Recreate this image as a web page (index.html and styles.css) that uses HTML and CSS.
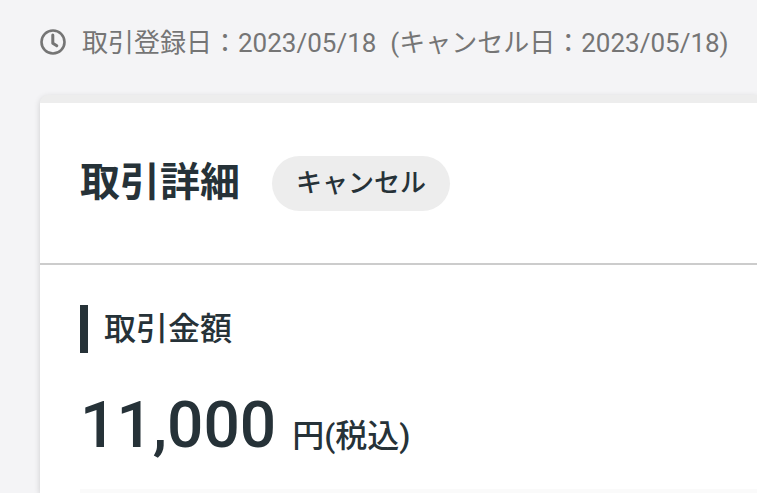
FILE: index.html
```html
<!DOCTYPE html>
<html lang="ja">
  <head>
    <meta charset="UTF-8" />
    <meta name="viewport" content="width=device-width, initial-scale=1.0" />
    <title>取引詳細</title>
    <link rel="stylesheet" href="styles.css">
  </head>
  <body>
    <div class="date">
      <svg class="date-icon" viewBox="0 0 26 26" aria-hidden="true">
        <circle cx="13" cy="13" r="11.5" />
        <path d="M12.8 6v8.2l4 2.6" stroke-width="3" stroke-linecap="round" stroke-linejoin="round" />
      </svg>
      <p class="date-text">
        <span>取引登録日：2023/05/18</span>
        <span>(キャンセル日：2023/05/18)</span>
      </p>
    </div>

    <main class="card">
      <header class="card-header">
        <h1>取引詳細</h1>
        <span class="status">キャンセル</span>
      </header>
      <section class="card-body">
        <h2>取引金額</h2>
        <p class="amount">11,000<span class="unit">円(税込)</span></p>
        <hr class="divider">
      </section>
    </main>
  </body>
</html>
```

FILE: styles.css
```css
* {
  box-sizing: border-box;
}
body {
  margin: 0;
  padding: 24px 0 0 40px;
  font-family: Roboto, "Noto Sans CJK JP", sans-serif;
  background-color: #f4f4f6;
  color: #263238;
}
h1,
h2,
p {
  margin: 0;
}
.date {
  display: flex;
  align-items: center;
  gap: 16px;
  height: 36px;
  margin-bottom: 35px;
  font-size: 26px;
  line-height: 36px;
  color: #757575;
  white-space: nowrap;
}
.date-text {
  display: flex;
  gap: 14px;
  padding-top: 2px;
}
.date-icon {
  flex: none;
  width: 26px;
  height: 26px;
  fill: none;
  stroke: #757575;
  stroke-width: 2.6;
}
.card {
  background-color: #fff;
  border-top: 8px solid #ededed;
  border-top-left-radius: 8px;
  box-shadow: 0 2px 6px rgba(0, 0, 0, 0.16);
}
.card-header {
  display: flex;
  align-items: center;
  gap: 32px;
  height: 162px;
  padding: 0 40px;
  border-bottom: 2px solid #ccc;
}
.card-header h1 {
  font-size: 40px;
  line-height: 56px;
  font-weight: 700;
}
.status {
  padding: 0 24px;
  border-radius: 28px;
  background-color: #ededed;
  font-size: 26px;
  line-height: 55px;
  font-weight: 500;
}
.card-body {
  padding: 40px 0 0 40px;
}
.card-body h2 {
  padding-left: 16px;
  border-left: 8px solid #263238;
  font-size: 32px;
  line-height: 48px;
  font-weight: 500;
}
.amount {
  padding: 25px 0 15px;
  font-size: 64px;
  line-height: 96px;
  font-weight: 500;
}
.unit {
  margin-left: 16px;
  font-size: 32px;
  line-height: 48px;
}
.divider {
  margin: 0;
  border: 0;
  border-top: 4px solid #fafafa;
}
```
